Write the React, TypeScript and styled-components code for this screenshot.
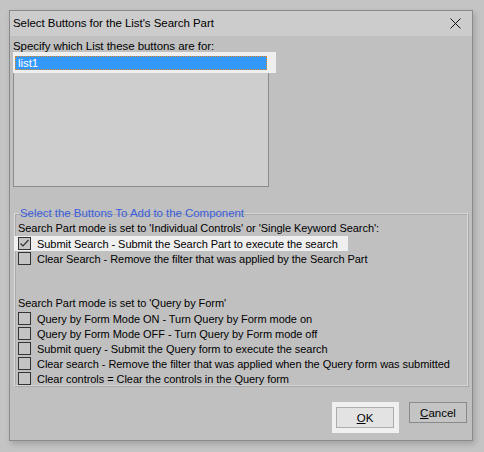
import React from "react";
import styled, { createGlobalStyle } from "styled-components";

const GlobalStyle = createGlobalStyle`
  html, body {
    margin: 0;
    padding: 0;
    background: #c4c4c4;
  }
  body {
    font-family: "Liberation Sans", Arial, sans-serif;
    font-size: 11px;
    letter-spacing: -0.05px;
    color: #000;
  }
`;

const Screen = styled.div`
  width: 484px;
  height: 452px;
  padding: 10px 0 0 9px;
  box-sizing: border-box;
`;

const Dialog = styled.div`
  width: 464px;
  height: 431px;
  box-sizing: border-box;
  border: 1px solid #8a8a8a;
  background: #c0c0c0;
  box-shadow: 2px 3px 6px rgba(0, 0, 0, 0.18);
  display: flex;
  flex-direction: column;
`;

const TitleBar = styled.div`
  height: 25px;
  background: #cccccc;
  display: flex;
  align-items: center;
  justify-content: space-between;
  padding-left: 3px;
`;

const Title = styled.span`
  font-size: 11.5px;
  line-height: 25px;
`;

const CloseButton = styled.button`
  width: 32px;
  height: 25px;
  margin-right: 1px;
  border: none;
  background: transparent;
  padding: 0;
  display: flex;
  align-items: center;
  justify-content: center;
`;

const Body = styled.div`
  flex: 1;
  display: flex;
  flex-direction: column;
  padding: 3px 5px 0 3px;
`;

const Label = styled.div`
  font-size: 11.5px;
  line-height: 15px;
  height: 15px;
`;

const ListArea = styled.div`
  position: relative;
  width: 256px;
  height: 133px;
  box-sizing: border-box;
  border: 1px solid #8c8c8c;
  background: #cecece;
  padding: 1px;
`;

const Spot = styled.div`
  position: absolute;
  left: -1px;
  top: -3px;
  width: 263px;
  height: 21px;
  background: #efefef;
`;

const ListItem = styled.div`
  position: relative;
  height: 14px;
  box-sizing: border-box;
  background: #3399ff;
  border: 1px dotted #e08a1e;
  color: #fff;
  font-size: 11.5px;
  line-height: 12px;
  padding-left: 2px;
`;

const GroupBox = styled.fieldset`
  margin: 19px 0 0 1px;
  padding: 0 0 6px 3px;
  width: 454px;
  min-width: 0;
  height: 180px;
  box-sizing: border-box;
  border: 1px solid #d6d6d6;
  border-left-color: #dcdcdc;
  box-shadow: inset 1px 1px 0 #a9a9a9, 1px 1px 0 #a9a9a9;
  display: flex;
  flex-direction: column;
`;

const Legend = styled.legend`
  color: #3a5ddb;
  font-size: 11.5px;
  padding: 0 1px;
  margin-left: 1px;
  line-height: 15px;
`;

const Line = styled.div<{ $gap?: number }>`
  line-height: 15px;
  height: 15px;
  white-space: nowrap;
  margin-top: ${(p) => p.$gap || 0}px;
`;

const Row = styled.label<{ $spot?: boolean }>`
  display: flex;
  align-items: center;
  height: 15px;
  width: fit-content;
  white-space: nowrap;
  margin-left: -4px;
  padding: 0 10px 0 4px;
  background: ${(p) => (p.$spot ? "#efefef" : "transparent")};
`;

const Box = styled.span`
  width: 13px;
  height: 13px;
  box-sizing: border-box;
  border: 1px solid #333333;
  background: #c4c4c4;
  margin-right: 6px;
  display: flex;
  align-items: center;
  justify-content: center;
  flex-shrink: 0;
`;

const Footer = styled.div`
  margin-top: auto;
  height: 46px;
  display: flex;
  justify-content: flex-end;
  align-items: flex-start;
  padding-top: 8px;
  box-sizing: border-box;
`;

const ButtonSpot = styled.span`
  background: #f0f0f0;
  padding: 5px 5px 5px 4px;
  margin-right: 10px;
  display: flex;
`;

const Button = styled.button<{ $primary?: boolean }>`
  width: 58px;
  height: 21px;
  box-sizing: border-box;
  font: inherit;
  font-size: 11.5px;
  color: #000;
  padding: 0;
  border: 1px solid ${(p) => (p.$primary ? "#adadad" : "#8a8a8a")};
  background: ${(p) => (p.$primary ? "#e3e3e3" : "#c4c4c4")};
`;

const Check = () => (
  <svg width="11" height="11" viewBox="0 0 11 11">
    <path d="M1.5 5.5 L4 8 L9.5 2" fill="none" stroke="#333" strokeWidth="1.2" />
  </svg>
);

const CheckRow = ({ text, checked, spot }: { text: string; checked?: boolean; spot?: boolean }) => (
  <Row $spot={spot}>
    <Box>{checked && <Check />}</Box>
    {text}
  </Row>
);

export default function App() {
  return (
    <>
      <GlobalStyle />
      <Screen>
        <Dialog>
          <TitleBar>
            <Title>Select Buttons for the List's Search Part</Title>
            <CloseButton>
              <svg width="11" height="11" viewBox="0 0 11 11">
                <path d="M0.5 0.5 L10.5 10.5 M10.5 0.5 L0.5 10.5" stroke="#111" strokeWidth="1" />
              </svg>
            </CloseButton>
          </TitleBar>
          <Body>
            <Label>Specify which List these buttons are for:</Label>
            <ListArea>
              <Spot />
              <ListItem>list1</ListItem>
            </ListArea>
            <GroupBox>
              <Legend>Select the Buttons To Add to the Component</Legend>
              <Line>Search Part mode is set to 'Individual Controls' or 'Single Keyword Search':</Line>
              <CheckRow checked spot text="Submit Search - Submit the Search Part to execute the search" />
              <CheckRow text="Clear Search - Remove the filter that was applied by the Search Part" />
              <Line $gap={30}>Search Part mode is set to 'Query by Form'</Line>
              <CheckRow text="Query by Form Mode ON -  Turn Query by Form mode on" />
              <CheckRow text="Query by Form Mode OFF - Turn Query by Form mode off" />
              <CheckRow text="Submit query - Submit the Query form to execute the search" />
              <CheckRow text="Clear search - Remove the filter that was applied when the Query form was submitted" />
              <CheckRow text="Clear controls = Clear the controls in the Query form" />
            </GroupBox>
            <Footer>
              <ButtonSpot>
                <Button $primary>
                  <u>O</u>K
                </Button>
              </ButtonSpot>
              <Button>
                <u>C</u>ancel
              </Button>
            </Footer>
          </Body>
        </Dialog>
      </Screen>
    </>
  );
}
